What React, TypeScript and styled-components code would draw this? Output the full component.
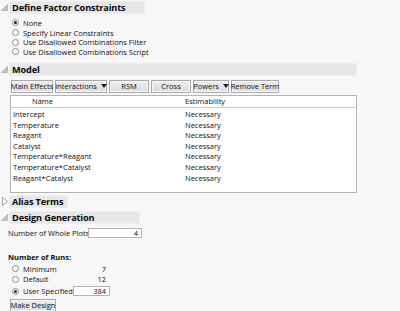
import React from "react";
import styled, { createGlobalStyle } from "styled-components";

const GlobalStyle = createGlobalStyle`
  html, body {
    margin: 0;
    padding: 0;
    background: #f7f7f7;
  }
  body {
    font-family: "Open Sans", "Noto Sans", sans-serif;
    font-size: 7.5px;
    color: #111;
    width: 400px;
    height: 311px;
    overflow: hidden;
    white-space: nowrap;
  }
`;

const Page = styled.div`
  display: flex;
  flex-direction: column;
`;

const Section = styled.section<{ $gap?: number }>`
  display: flex;
  flex-direction: column;
  margin-bottom: ${(p) => p.$gap ?? 0}px;
`;

const HeaderRow = styled.div`
  display: flex;
  align-items: center;
  height: 14px;
`;

const Toggle = styled.div`
  width: 9px;
  height: 14px;
  display: flex;
  align-items: center;
  justify-content: center;
`;

const TitleBar = styled.div<{ $w: number }>`
  width: ${(p) => p.$w}px;
  height: 13px;
  background: #e7e7e7;
  border: 1px solid #eeeeee;
  box-sizing: border-box;
  display: flex;
  align-items: center;
  padding-left: 2px;
  font-size: 9.2px;
  letter-spacing: -0.15px;
  font-weight: 700;
  color: #0a0a0a;
`;

const Body = styled.div<{ $pad: number; $top?: number }>`
  display: flex;
  flex-direction: column;
  padding-left: ${(p) => p.$pad}px;
  padding-top: ${(p) => p.$top ?? 0}px;
`;

const RadioRow = styled.label<{ $h?: number }>`
  display: flex;
  align-items: center;
  height: ${(p) => p.$h ?? 9.7}px;
  gap: 4px;
`;

const Dot = styled.span<{ $on?: boolean }>`
  width: 7px;
  height: 7px;
  box-sizing: border-box;
  border-radius: 50%;
  border: 1px solid #8a8a8a;
  background: #fff;
  position: relative;
  flex: none;
  &::after {
    content: "";
    display: ${(p) => (p.$on ? "block" : "none")};
    position: absolute;
    left: 1px;
    top: 1px;
    width: 3px;
    height: 3px;
    border-radius: 50%;
    background: #1a1a1a;
  }
`;

const ButtonBar = styled.div`
  display: flex;
  gap: 2px;
  margin: 3px 0 2px 1px;
`;

const Btn = styled.button<{ $w: number }>`
  width: ${(p) => p.$w}px;
  height: 13px;
  padding: 0;
  font-family: inherit;
  font-size: 7.5px;
  color: #111;
  background: linear-gradient(#ececec, #dcdcdc);
  border: 1px solid #a8a8a8;
  box-shadow: inset 0 0 0 1px #f8f8f8;
  display: flex;
  align-items: center;
  justify-content: center;
  gap: 4px;
  white-space: nowrap;
`;

const Arrow = styled.span`
  width: 0;
  height: 0;
  border-left: 3px solid transparent;
  border-right: 3px solid transparent;
  border-top: 4px solid #222;
`;

const Table = styled.div`
  width: 347px;
  height: 98px;
  background: #fff;
  border: 1px solid #b4b4b4;
  box-sizing: border-box;
  display: flex;
  flex-direction: column;
`;

const Row = styled.div<{ $head?: boolean }>`
  display: grid;
  grid-template-columns: 172px 1fr;
  height: ${(p) => (p.$head ? 11 : 10.6)}px;
  align-items: center;
  border-bottom: ${(p) => (p.$head ? "1px solid #c8c8c8" : "none")};
  margin-bottom: ${(p) => (p.$head ? 1 : 0)}px;
`;

const Cell = styled.span<{ $indent?: number }>`
  padding-left: ${(p) => p.$indent ?? 2}px;
`;

const FieldRow = styled.div`
  display: flex;
  align-items: center;
  height: 11px;
`;

const FieldLabel = styled.span`
  width: 80px;
`;

const Input = styled.div<{ $w: number }>`
  width: ${(p) => p.$w}px;
  height: 10px;
  background: #fff;
  border: 1px solid #b4b4b4;
  box-sizing: border-box;
  text-align: right;
  padding-right: 3px;
  line-height: 8px;
`;

const SubTitle = styled.div`
  font-weight: 700;
  height: 10px;
  line-height: 10px;
  margin: 13px 0 2px;
`;

const RunRow = styled.div<{ $h: number }>`
  display: flex;
  align-items: center;
  height: ${(p) => p.$h}px;
`;

const RunLabel = styled.div`
  width: 50px;
`;

const RunValue = styled.div`
  width: 37px;
  text-align: right;
  padding-right: 4px;
  box-sizing: border-box;
`;

const Footer = styled.div`
  margin-top: 1px;
  margin-left: 2px;
`;

function Disclosure({ open }: { open: boolean }) {
  return (
    <Toggle>
      {open ? (
        <svg width="7" height="7" viewBox="0 0 7 7">
          <polygon points="0.5,6.5 6.5,0.5 6.5,6.5" fill="#c4c4c4" stroke="#a0a0a0" strokeWidth="0.6" />
        </svg>
      ) : (
        <svg width="6" height="9" viewBox="0 0 6 9">
          <polygon points="0.5,0.5 5.5,4.5 0.5,8.5" fill="#fff" stroke="#8a8a8a" strokeWidth="0.8" />
        </svg>
      )}
    </Toggle>
  );
}

function Header({ title, width, open = true }: { title: string; width: number; open?: boolean }) {
  return (
    <HeaderRow>
      <Disclosure open={open} />
      <TitleBar $w={width}>{title}</TitleBar>
    </HeaderRow>
  );
}

const constraints = [
  "None",
  "Specify Linear Constraints",
  "Use Disallowed Combinations Filter",
  "Use Disallowed Combinations Script",
];

const terms = [
  "Intercept",
  "Temperature",
  "Reagant",
  "Catalyst",
  "Temperature*Reagant",
  "Temperature*Catalyst",
  "Reagant*Catalyst",
];

export default function App() {
  return (
    <Page>
      <GlobalStyle />
      <Section $gap={6}>
        <Header title="Define Factor Constraints" width={136} />
        <Body $pad={12} $top={4}>
          {constraints.map((c, i) => (
            <RadioRow key={c}>
              <Dot $on={i === 0} />
              {c}
            </RadioRow>
          ))}
        </Body>
      </Section>

      <Section $gap={2}>
        <Header title="Model" width={348} />
        <Body $pad={10}>
          <ButtonBar>
            <Btn $w={42}>Main Effects</Btn>
            <Btn $w={52}>
              Interactions <Arrow />
            </Btn>
            <Btn $w={40}>RSM</Btn>
            <Btn $w={40}>Cross</Btn>
            <Btn $w={36}>
              Powers <Arrow />
            </Btn>
            <Btn $w={48}>Remove Term</Btn>
          </ButtonBar>
          <Table>
            <Row $head>
              <Cell $indent={21}>Name</Cell>
              <Cell>Estimability</Cell>
            </Row>
            {terms.map((t) => (
              <Row key={t}>
                <Cell>{t}</Cell>
                <Cell>Necessary</Cell>
              </Row>
            ))}
          </Table>
        </Body>
      </Section>

      <Section $gap={2}>
        <Header title="Alias Terms" width={59} open={false} />
      </Section>

      <Section>
        <Header title="Design Generation" width={131} />
        <Body $pad={8} $top={3}>
          <FieldRow>
            <FieldLabel>Number of Whole Plots</FieldLabel>
            <Input $w={54}>4</Input>
          </FieldRow>
          <SubTitle>Number of Runs:</SubTitle>
          <Body $pad={4}>
            <RunRow $h={10}>
              <RadioRow $h={10}>
                <Dot />
                <RunLabel>Minimum</RunLabel>
              </RadioRow>
              <RunValue>7</RunValue>
            </RunRow>
            <RunRow $h={11}>
              <RadioRow $h={11}>
                <Dot />
                <RunLabel>Default</RunLabel>
              </RadioRow>
              <RunValue>12</RunValue>
            </RunRow>
            <RunRow $h={13}>
              <RadioRow $h={13}>
                <Dot $on />
                <RunLabel>User Specified</RunLabel>
              </RadioRow>
              <Input $w={37}>384</Input>
            </RunRow>
          </Body>
          <Footer>
            <Btn $w={46}>Make Design</Btn>
          </Footer>
        </Body>
      </Section>
    </Page>
  );
}
